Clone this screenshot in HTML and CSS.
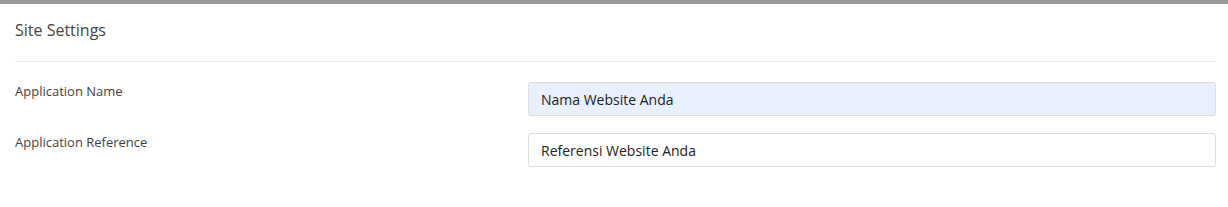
FILE: index.html
```html
<!DOCTYPE html>
<html>
<head>
    <title>Site Settings</title>
    <link rel="stylesheet" href="styles.css">
</head>
<body>
    <div class="panel">
        <div class="panel-heading">
            <h3>Site Settings</h3>
        </div>
        <form class="settings-form">
            <div class="form-row">
                <label for="app-name">Application Name</label>
                <input type="text" id="app-name" class="form-control filled" value="Nama Website Anda">
            </div>
            <div class="form-row">
                <label for="app-ref">Application Reference</label>
                <input type="text" id="app-ref" class="form-control" value="Referensi Website Anda">
            </div>
        </form>
    </div>
</body>
</html>
```

FILE: styles.css
```css
body {
    margin: 0;
    font-family: "Open Sans", sans-serif;
    background: #fff;
    color: #333;
}

.panel {
    border-top: 4px solid #9a9a9a;
    padding: 0 12px 0 15px;
}

.panel-heading {
    border-bottom: 1px solid #e9e9e9;
    padding: 13px 0 18px;
}

.panel-heading h3 {
    margin: 0;
    font-size: 16px;
    font-weight: 400;
    line-height: 26px;
    color: #444;
}

.settings-form {
    padding-top: 20px;
}

.form-row {
    display: grid;
    grid-template-columns: 498px 1fr;
    column-gap: 15px;
    margin-bottom: 17px;
}

.form-row label {
    font-size: 13px;
    font-weight: 400;
    color: #3f3f3f;
    line-height: 18px;
}

.form-control {
    height: 34px;
    box-sizing: border-box;
    border: 1px solid #ddd;
    border-radius: 3px;
    padding: 6px 12px;
    font-family: "Open Sans", sans-serif;
    font-size: 14px;
    color: #222;
    background: #fff;
    outline: none;
}

.form-control.filled {
    background: #e8f0fe;
}
```
